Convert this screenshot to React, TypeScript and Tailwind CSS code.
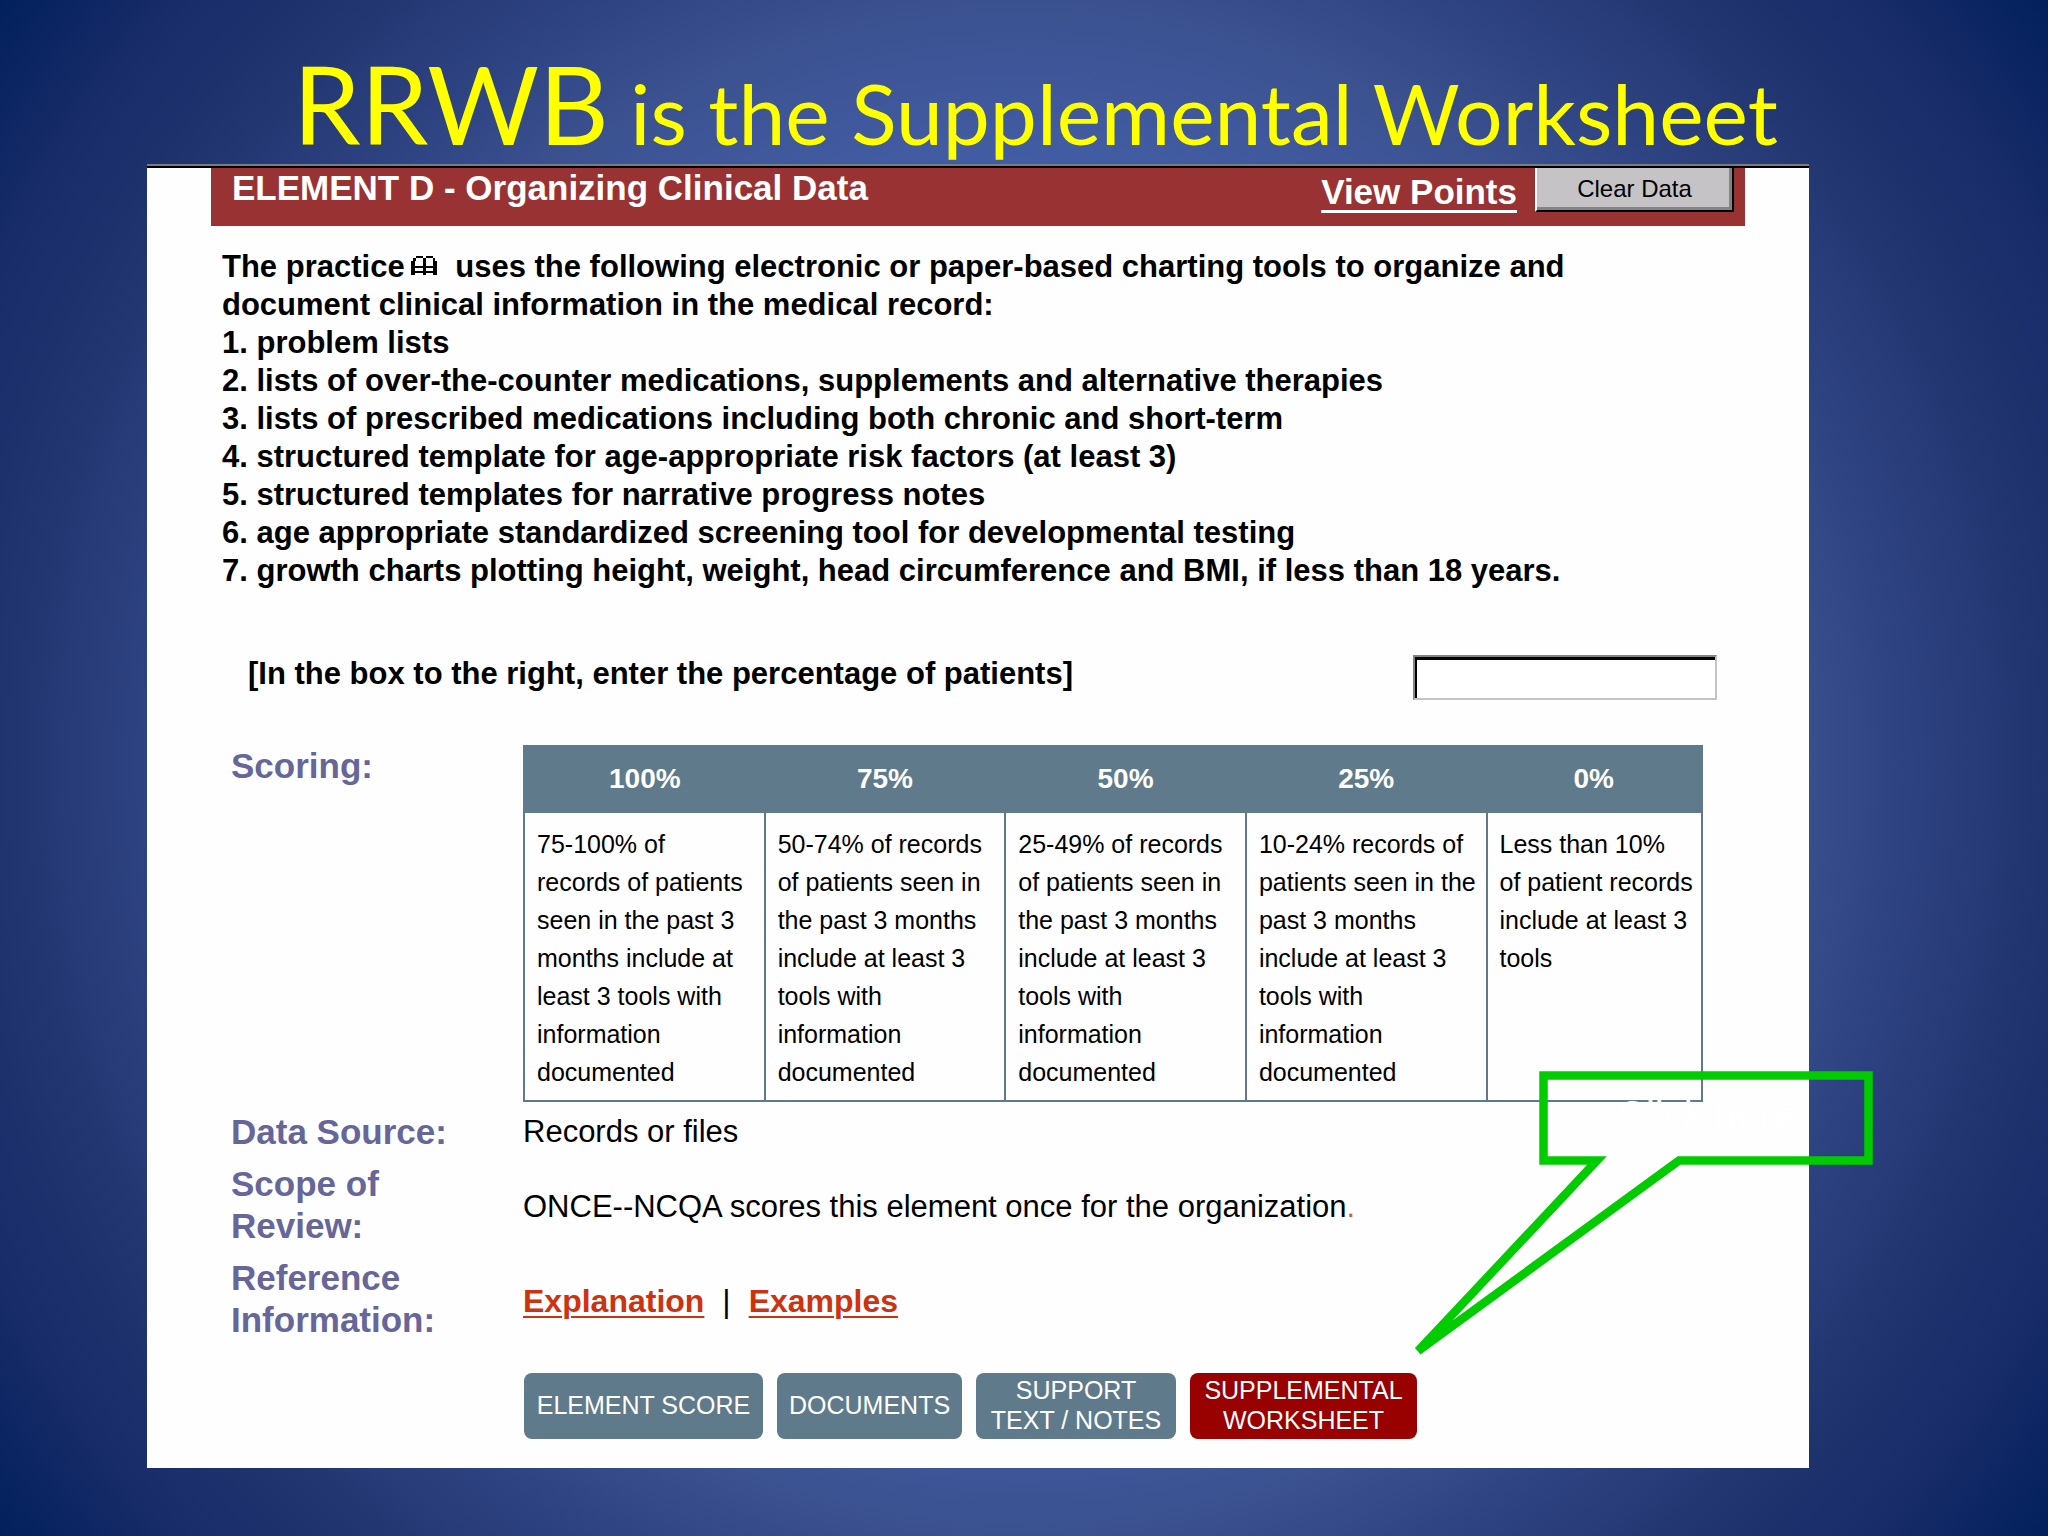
const paragraph = [
  "document clinical information in the medical record:",
  "1. problem lists",
  "2. lists of over-the-counter medications, supplements and alternative therapies",
  "3. lists of prescribed medications including both chronic and short-term",
  "4. structured template for age-appropriate risk factors (at least 3)",
  "5. structured templates for narrative progress notes",
  "6. age appropriate standardized screening tool for developmental testing",
  "7. growth charts plotting height, weight, head circumference and BMI, if less than 18 years.",
];

const scoring = [
  { score: "100%", text: "75-100% of\nrecords of patients\nseen in the past 3 months include at least 3 tools with information documented" },
  { score: "75%", text: "50-74% of records of patients seen in the past 3 months include at least 3 tools with information documented" },
  { score: "50%", text: "25-49% of records of patients seen in the past 3 months include at least 3 tools with information documented" },
  { score: "25%", text: "10-24% records of patients seen in the past 3 months include at least 3 tools with information documented" },
  { score: "0%", text: "Less than 10%\nof patient records include at least 3 tools" },
];

function BookIcon() {
  return (
    <svg className="inline-block align-baseline ml-1.5 mr-2.5" width="26" height="21" viewBox="0 0 26 21" aria-hidden="true">
      <path d="M5 0h7v2H5zM15 0h7v2h-7zM2 2h3v3H2zM22 2h2v3h-2zM0 5h4v14H0zM22 5h4v14h-4zM12 2h3v17h-3zM0 10h26v2H0zM0 15h26v2H0z" />
    </svg>
  );
}

function Callout() {
  return (
    <div className="absolute top-[905px] -right-[67px] w-[464px] h-[284px] pointer-events-none">
      <svg className="absolute inset-0" width="464" height="284" viewBox="0 0 464 284" fill="none" stroke="#00cc00" strokeWidth="8.5" aria-hidden="true">
        <path d="M131.5 4.5H456.5V89.5H267L6 280L185 89.5H131.5Z" />
      </svg>
      <div className="absolute left-[132px] right-[8px] top-5 text-center text-[40px] leading-[48px] text-white">Click here</div>
    </div>
  );
}

export default function App() {
  const tab = "h-[66px] rounded-lg px-3 pb-0.5 text-[25px] leading-[30px] text-white";
  return (
    <div className="min-h-screen bg-[radial-gradient(circle_at_center,#4a68b8_0%,#445fa8_45%,#3b518f_60%,#2d4280_69%,#20356f_80%,#162b68_90%,#02205c_100%)] pl-[147px] pr-[239px] pb-[68px] font-['Liberation_Sans',Arial,sans-serif] text-black">
      <h1 className="h-[164px] pt-[36px] pl-[146px] whitespace-nowrap font-['Lato',sans-serif] text-[84px] leading-[134px] text-[#ffff00]">
        <span className="text-[108px]">RRWB</span> is the Supplemental Worksheet
      </h1>

      <main className="relative bg-[#fefefe] border-t-2 border-[#7b7b84] pb-[29px]">
        <div className="h-0.5 bg-black" />
        <header className="mx-16 h-[58px] bg-[#993333] pl-[21px] pr-[11px] flex items-start text-white font-bold text-[35px] leading-10">
          <h2 className="flex-1">ELEMENT D - Organizing Clinical Data</h2>
          <a href="#points" className="mt-1 mr-[18px] underline decoration-[3px] underline-offset-[6px]">View Points</a>
          <button className="w-[199px] h-11 bg-[#c6c3c6] border-l-2 border-l-white border-r-2 border-b-2 border-r-black border-b-black shadow-[inset_-3px_-3px_0_#848284] text-black text-[24px] leading-8 font-normal">Clear Data</button>
        </header>

        <div className="pt-[22px] pl-[75px] font-bold text-[31px] leading-[38px]">
          <p>The practice<BookIcon /> uses the following electronic or paper-based charting tools to organize and</p>
          {paragraph.map((line) => <p key={line}>{line}</p>)}
        </div>

        <div className="mt-[65px] pl-[101px] pr-[92px] flex items-start justify-between font-bold text-[31px] leading-[38px]">
          <label htmlFor="pct">[In the box to the right, enter the percentage of patients]</label>
          <input id="pct" type="text" className="w-[304px] h-[45px] bg-white border-2 border-t-[#848284] border-l-[#848284] border-r-[#c6c3c6] border-b-[#c6c3c6] shadow-[inset_2px_3px_0_#000]" />
        </div>

        <div className="mt-[45px] pl-[84px] pr-[106px] flex">
          <h3 className="w-[292px] shrink-0 font-bold text-[35px] leading-[42px] text-[#666699]">Scoring:</h3>
          <table className="flex-1 table-fixed border-collapse border-2 border-[#5f7b8b] text-[25px] leading-[38px]">
            <thead>
              <tr className="h-[66px] bg-[#5f7b8b] text-white text-[28px]">
                {scoring.map((s) => <th key={s.score} className="w-[241px] last:w-[216px]">{s.score}</th>)}
              </tr>
            </thead>
            <tbody>
              <tr>
                {scoring.map((s) => <td key={s.score} className="border-2 border-[#5f7b8b] align-top whitespace-pre-line pt-3 pb-[9px] pl-3 pr-1">{s.text}</td>)}
              </tr>
            </tbody>
          </table>
        </div>

        <dl className="mt-[9px] pl-[84px] grid grid-cols-[292px_1fr] items-center gap-y-2.5 text-[31px] leading-[42px]">
          <dt className="font-bold text-[35px] text-[#666699]">Data Source:</dt>
          <dd>Records or files</dd>
          <dt className="font-bold text-[35px] text-[#666699]">Scope of<br />Review:</dt>
          <dd className="pt-1">ONCE--NCQA scores this element once for the organization<span className="text-[#cc6633]">.</span></dd>
          <dt className="font-bold text-[35px] text-[#666699]">Reference<br />Information:</dt>
          <dd className="pt-1 flex gap-[18px] text-[32px]">
            <a href="#explanation" className="font-bold text-[#cc3311] underline decoration-2 underline-offset-4">Explanation</a>
            <span>|</span>
            <a href="#examples" className="font-bold text-[#cc3311] underline decoration-2 underline-offset-4">Examples</a>
          </dd>
        </dl>

        <div className="mt-8 pl-[377px] flex gap-3.5">
          <button className={`${tab} w-[239px] bg-[#5f7b8b]`}>ELEMENT SCORE</button>
          <button className={`${tab} w-[185px] bg-[#5f7b8b]`}>DOCUMENTS</button>
          <button className={`${tab} w-[200px] bg-[#5f7b8b]`}>SUPPORT<br />TEXT / NOTES</button>
          <button className={`${tab} w-[227px] bg-[#990000]`}>SUPPLEMENTAL<br />WORKSHEET</button>
        </div>

        <Callout />
      </main>
    </div>
  );
}
